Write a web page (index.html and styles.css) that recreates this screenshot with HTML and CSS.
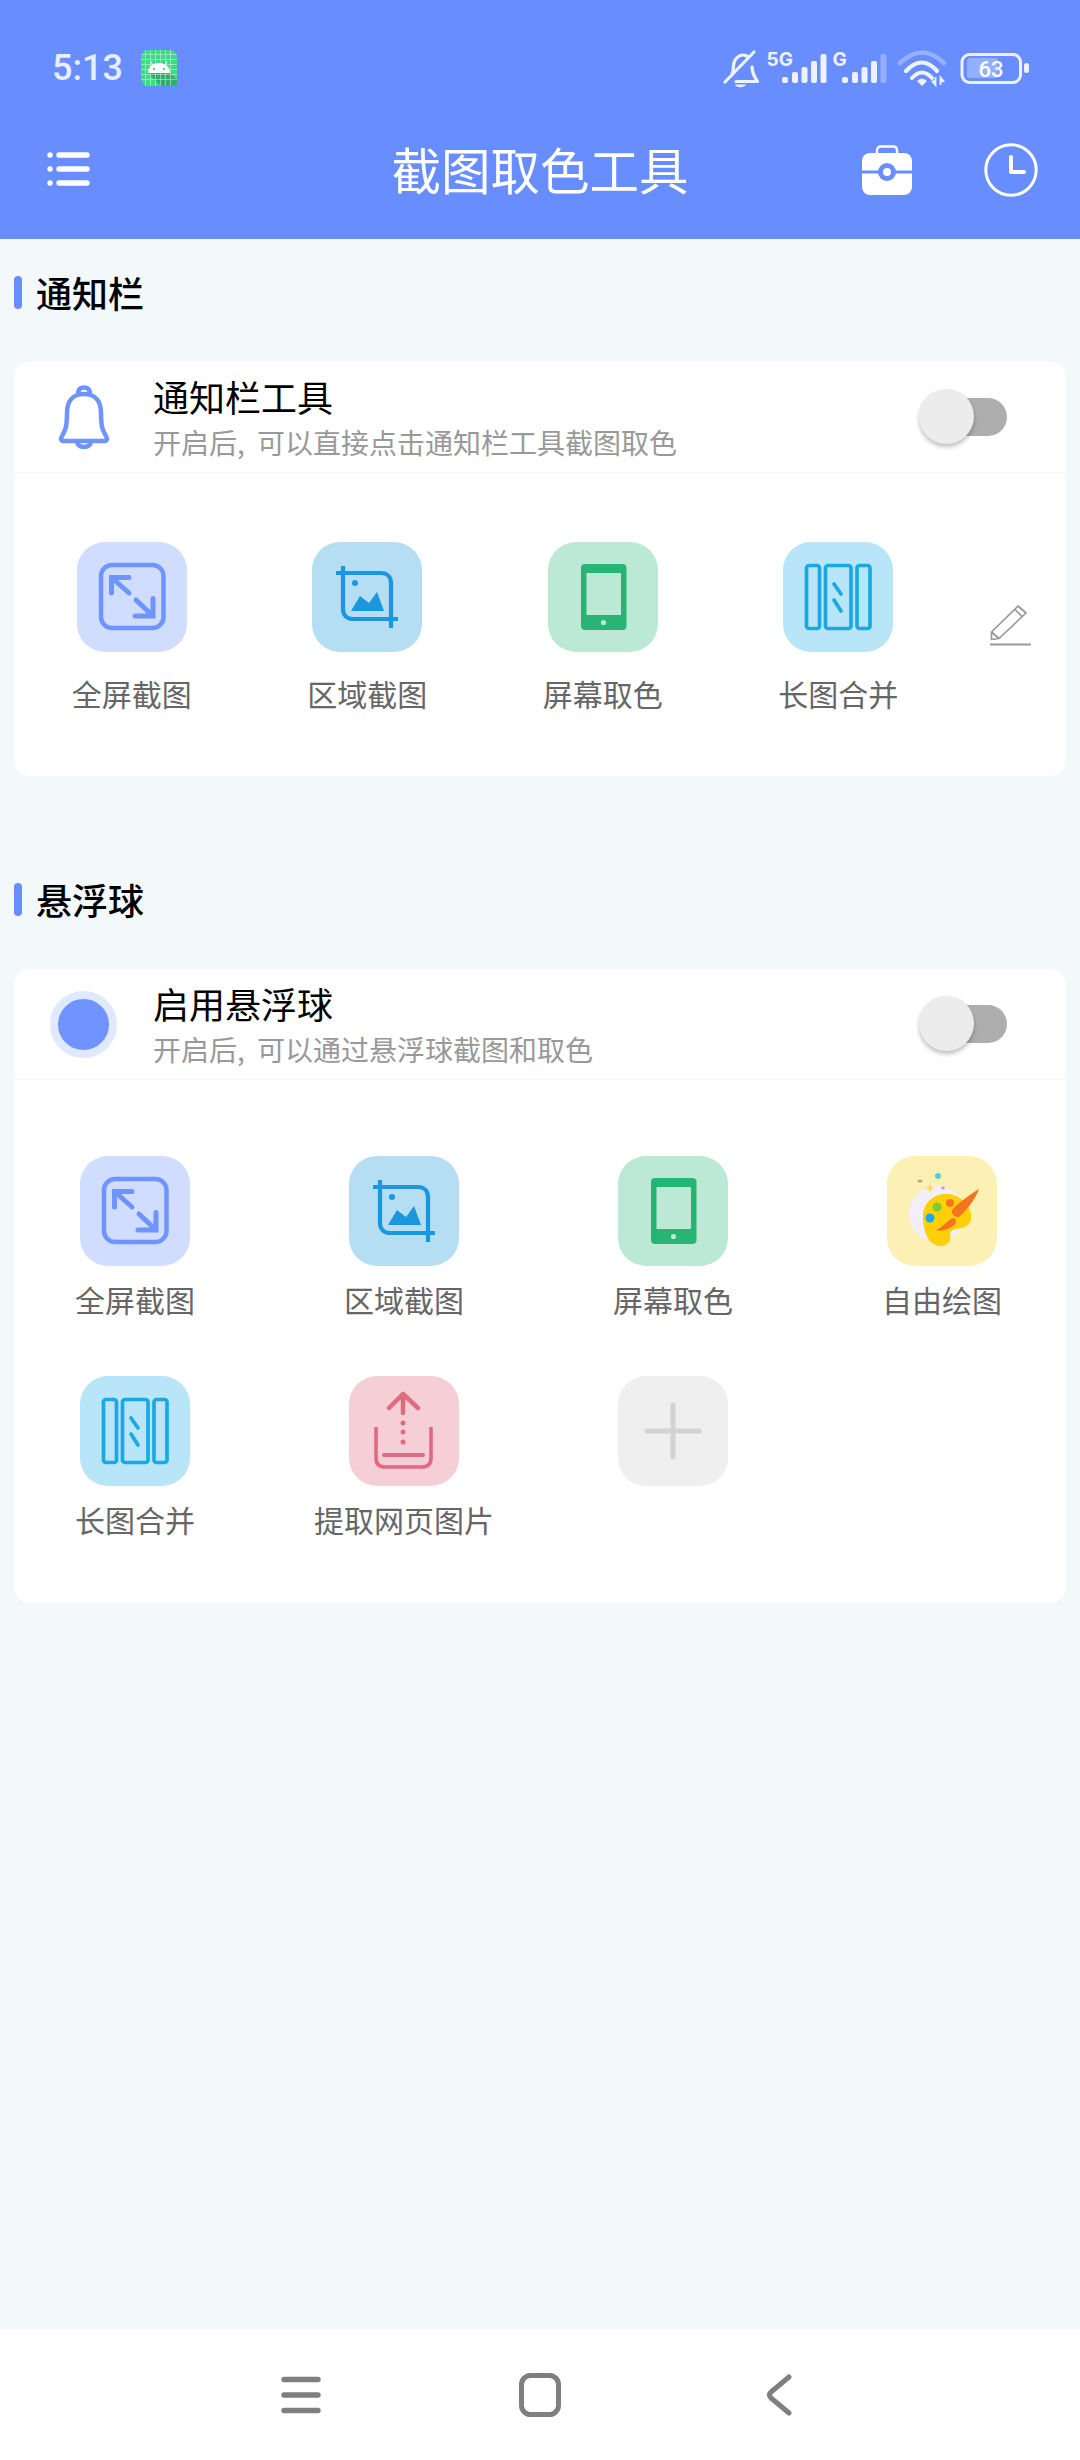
FILE: index.html
```html
<!doctype html>
<html lang="zh-CN">
<head>
	<meta charset="UTF-8">
	<title>截图取色工具</title>
	<link rel="stylesheet" href="styles.css">
</head>
<body>
	<header class="header">
		<div class="statusbar">
			<div class="status-left">
				<span class="time">5:13</span>
				<svg class="app-icon" width="36" height="36" viewBox="0 0 36 36">
					<rect width="36" height="36" rx="8" fill="#3ddc84"/>
					<path d="M7 23H29L36 30V36H20Z" fill="#2fae6c"/>
					<path d="M4.500 0V36M9.500 0V36M14.500 0V36M19.500 0V36M24.500 0V36M29.500 0V36M0 4.500H36M0 9.500H36M0 14.500H36M0 19.500H36M0 24.500H36M0 29.500H36" stroke="#fff" stroke-opacity=".4" stroke-width="1"/>
					<path d="M7 23C7 16.500 12 13 18 13S29 16.500 29 23Z" fill="#fff"/>
					<path d="M11.500 14.500L10 11.500M24.500 14.500L26 11.500" stroke="#fff" stroke-width="1"/>
					<circle cx="13" cy="19" r="1" fill="#2fae6c"/>
					<circle cx="23" cy="19" r="1" fill="#2fae6c"/>
				</svg>
			</div>
			<svg class="status-right" width="310" height="50" viewBox="0 -10 310 50">
				<g fill="none" stroke="#eef2ff" stroke-width="3.200" stroke-linecap="round" stroke-linejoin="round">
					<path d="M5 32L34 2"/>
					<path d="M12 25C13 22 13.500 20 13.500 16C13.500 10 18 5 23 5C25 5 27 6 28 7"/>
					<path d="M16 31.500H37.500C34 27 32.500 23 32 17"/>
				</g>
				<path d="M15 34.500H26C25 38 16 38 15 34.500Z" fill="#eef2ff"/>
				<text class="net" x="46.500" y="15.500">5G</text>
				<g fill="#eef2ff">
					<rect x="62" y="27" width="6" height="6" rx="2"/>
					<rect x="72" y="22" width="6" height="11" rx="2"/>
					<rect x="81.500" y="17" width="6" height="16" rx="2"/>
					<rect x="91" y="11" width="6" height="22" rx="2"/>
					<rect x="100.500" y="4" width="6" height="29" rx="2"/>
				</g>
				<text class="net" x="112.500" y="15.500">G</text>
				<g fill="#eef2ff">
					<rect x="122" y="27" width="6" height="6" rx="2"/>
					<rect x="132" y="22" width="6" height="11" rx="2"/>
					<rect x="141.500" y="17" width="6" height="16" rx="2"/>
					<rect x="151" y="11" width="6" height="22" rx="2"/>
					<rect x="160.500" y="4" width="6" height="29" rx="2" opacity=".35"/>
				</g>
				<g fill="none" stroke="#eef2ff" stroke-linecap="round">
					<path d="M180 13Q202 -8 224 13" stroke-width="4.500" opacity=".35"/>
					<path d="M186 21Q202 4 217 21" stroke-width="4.200"/>
					<path d="M192 28Q202 17 212 28" stroke-width="4"/>
				</g>
				<path d="M197 31Q202 26 207 31L202 36Z" fill="#eef2ff"/>
				<path d="M215.500 27V34M212.500 31.500L215.500 35L215.500 31ZM220.500 35V28M223.500 31L220.500 27.500L220.500 32Z" fill="#eef2ff" stroke="#eef2ff" stroke-width="1.800"/>
				<rect x="247" y="8" width="31" height="20" rx="3" fill="#fff" opacity=".3"/>
				<rect x="242" y="4.500" width="58.500" height="28" rx="7.500" fill="none" stroke="#eef2ff" stroke-width="3"/>
				<rect x="304" y="13" width="5" height="10" rx="2.500" fill="#eef2ff"/>
				<text class="batt" x="271" y="27" text-anchor="middle">63</text>
			</svg>
		</div>
		<div class="toolbar">
			<svg class="menu-icon" width="43" height="36" viewBox="0 0 43 36">
				<circle cx="3" cy="4" r="2.700" fill="#fff"/>
				<circle cx="3" cy="18" r="2.700" fill="#fff"/>
				<circle cx="3" cy="32" r="2.700" fill="#fff"/>
				<path d="M12 4H40M12 18H40M12 32H40" stroke="#fff" stroke-width="5.400" stroke-linecap="round"/>
			</svg>
			<h1 class="title">截图取色工具</h1>
			<div class="tool-right">
				<svg width="50" height="50" viewBox="0 0 50 50">
					<path d="M15 9V5.500C15 3 16.500 1.500 19 1.500H31C33.500 1.500 35 3 35 5.500V9" fill="none" stroke="#fff" stroke-width="2.400"/>
					<rect y="8" width="50" height="42" rx="8" fill="#fff"/>
					<path d="M0 27H50" stroke="#688dff" stroke-width="3"/>
					<circle cx="25" cy="27" r="9" fill="#688dff"/>
					<circle cx="25" cy="27" r="4" fill="#fff"/>
				</svg>
				<svg width="54" height="54" viewBox="0 0 54 54">
					<circle cx="27" cy="27" r="25.200" fill="none" stroke="#fff" stroke-width="3"/>
					<path d="M27 14V29H40" fill="none" stroke="#fff" stroke-width="4" stroke-linecap="round" stroke-linejoin="round"/>
				</svg>
			</div>
		</div>
	</header>

	<main class="main">
		<div class="sec-head">
			<i class="sec-bar"></i>
			<h2 class="sec-title">通知栏</h2>
		</div>
		<section class="card">
			<div class="row">
				<div class="row-icon">
					<svg width="52" height="64" viewBox="0 0 52 64">
						<g fill="none" stroke="#7094ff" stroke-width="4.500" stroke-linejoin="round">
							<path d="M3 54C3 52 5 50 7 45C9 40 9 34 9 28C9 16 15 9 26 9C37 9 43 16 43 28C43 34 43 40 45 45C47 50 49 52 49 54C49 55 48 56 47 56H5C4 56 3 55 3 54Z"/>
							<path d="M20 9C20 5 22 2.500 26 2.500C30 2.500 32 5 32 9"/>
							<path d="M19 56C19 60 22 62 26 62C30 62 33 60 33 56"/>
						</g>
					</svg>
				</div>
				<div class="row-text">
					<div class="row-title">通知栏工具</div>
					<div class="row-sub">开启后, 可以直接点击通知栏工具截图取色</div>
				</div>
				<div class="switch"><i class="knob"></i></div>
			</div>
			<div class="quick">
				<div class="cell">
					<div class="tile t-blue">
						<svg width="110" height="110" viewBox="0 0 110 110"><use href="#ic-full"/></svg>
					</div>
					<span class="label">全屏截图</span>
				</div>
				<div class="cell">
					<div class="tile t-sky">
						<svg width="110" height="110" viewBox="0 0 110 110"><use href="#ic-crop"/></svg>
					</div>
					<span class="label">区域截图</span>
				</div>
				<div class="cell">
					<div class="tile t-green">
						<svg width="110" height="110" viewBox="0 0 110 110"><use href="#ic-phone"/></svg>
					</div>
					<span class="label">屏幕取色</span>
				</div>
				<div class="cell">
					<div class="tile t-cyan">
						<svg width="110" height="110" viewBox="0 0 110 110"><use href="#ic-long"/></svg>
					</div>
					<span class="label">长图合并</span>
				</div>
				<div class="edit">
					<svg width="42" height="41" viewBox="0 0 42 41">
						<path d="M1.500 27L28 1L36 8L9 33.500L1.500 34.500ZM1.500 27L9 33.500M24.500 4L32 11.500" fill="none" stroke="#999" stroke-width="1.700" stroke-linejoin="round"/>
						<path d="M0 39.500H41" stroke="#999" stroke-width="2"/>
					</svg>
				</div>
			</div>
		</section>

		<div class="sec-head sec-next">
			<i class="sec-bar"></i>
			<h2 class="sec-title">悬浮球</h2>
		</div>
		<section class="card">
			<div class="row">
				<div class="row-icon"><i class="ball"></i></div>
				<div class="row-text">
					<div class="row-title">启用悬浮球</div>
					<div class="row-sub">开启后, 可以通过悬浮球截图和取色</div>
				</div>
				<div class="switch"><i class="knob"></i></div>
			</div>
			<div class="grid">
				<div class="cell">
					<div class="tile t-blue">
						<svg width="110" height="110" viewBox="0 0 110 110"><use href="#ic-full"/></svg>
					</div>
					<span class="label">全屏截图</span>
				</div>
				<div class="cell">
					<div class="tile t-sky">
						<svg width="110" height="110" viewBox="0 0 110 110"><use href="#ic-crop"/></svg>
					</div>
					<span class="label">区域截图</span>
				</div>
				<div class="cell">
					<div class="tile t-green">
						<svg width="110" height="110" viewBox="0 0 110 110"><use href="#ic-phone"/></svg>
					</div>
					<span class="label">屏幕取色</span>
				</div>
				<div class="cell">
					<div class="tile t-yellow">
						<svg width="110" height="110" viewBox="0 0 110 110">
							<circle cx="50" cy="58" r="28" fill="#f3effa"/>
							<path d="M36 60C36 45 50 36 62 38C76 40 86 52 84 64C82 72 72 72 66 74C62 76 64 80 63 84C60 92 48 92 42 84C38 78 36 70 36 60Z" fill="#ffd00a"/>
							<circle cx="63" cy="47" r="4" fill="#f5741f"/>
							<circle cx="50" cy="51" r="4.500" fill="#7ccb34"/>
							<circle cx="43" cy="62" r="4.500" fill="#1fa6e8"/>
							<path d="M92 33C84 38 72 46 65 54C64 58 68 62 72 61C80 54 89 42 92 33Z" fill="#f5741f"/>
							<path d="M49 74C56 72 60 64 66 62C70 62 70 68 66 70C62 73 55 76 49 74Z" fill="#f5741f"/>
							<circle cx="51" cy="20" r="3" fill="#5cc8d0"/>
							<ellipse cx="33" cy="25" rx="2.500" ry="1.500" fill="#b9a98a"/>
							<path d="M43 27L44.500 31L48 32L44.500 33.500L43 37L41.500 33.500L38 32L41.500 31Z" fill="#f8d875"/>
							<circle cx="56" cy="32" r="1.800" fill="#b9a8e0"/>
						</svg>
					</div>
					<span class="label">自由绘图</span>
				</div>
				<div class="cell">
					<div class="tile t-cyan">
						<svg width="110" height="110" viewBox="0 0 110 110"><use href="#ic-long"/></svg>
					</div>
					<span class="label">长图合并</span>
				</div>
				<div class="cell">
					<div class="tile t-red">
						<svg width="110" height="110" viewBox="0 0 110 110">
							<g fill="none" stroke="#df6b7f" stroke-linecap="round" stroke-linejoin="round">
								<path d="M40 32L54 18L69 32M54 18V37" stroke-width="4.500"/>
								<path d="M27 51V82C27 88 30 91 36 91H73C79 91 82 88 82 82V51" stroke-width="3.600" stroke-linecap="butt"/>
								<path d="M35 79H74" stroke-width="4"/>
							</g>
							<circle cx="54" cy="47" r="2.500" fill="#df6b7f"/>
							<circle cx="54" cy="56" r="2.500" fill="#df6b7f"/>
							<circle cx="54" cy="66" r="2.500" fill="#df6b7f"/>
						</svg>
					</div>
					<span class="label">提取网页图片</span>
				</div>
				<div class="cell">
					<div class="tile t-gray">
						<svg width="110" height="110" viewBox="0 0 110 110">
							<path d="M55 29V81M29 55H81" stroke="#d2d2d2" stroke-width="5" stroke-linecap="round"/>
						</svg>
					</div>
				</div>
			</div>
		</section>
	</main>

	<nav class="navbar">
		<svg width="40" height="38" viewBox="0 0 40 38">
			<path d="M3 3.500H37M3 19H37M3 34.500H37" stroke="#7f7f7f" stroke-width="5.400" stroke-linecap="round"/>
		</svg>
		<svg width="42" height="44" viewBox="0 0 42 44">
			<rect x="2.500" y="2.500" width="37" height="39" rx="9" fill="none" stroke="#7f7f7f" stroke-width="5"/>
		</svg>
		<svg width="26" height="42" viewBox="0 0 26 42">
			<path d="M23 3L5 18C3 20 3 22 5 24L23 39" fill="none" stroke="#7f7f7f" stroke-width="5" stroke-linecap="round" stroke-linejoin="round"/>
		</svg>
	</nav>

	<!-- shared tool icons -->
	<svg class="defs" width="0" height="0">
		<defs>
			<g id="ic-full" fill="none" stroke="#7094ff" stroke-linecap="round">
				<rect x="24" y="23" width="62.500" height="63" rx="11" stroke-width="4.500"/>
				<path d="M52 35.500H34.500V51M34.500 35.500L52 51M58 74H76V56.500M76 74L59 58" stroke-width="5"/>
			</g>
			<g id="ic-crop">
				<g fill="none" stroke="#1a97dd" stroke-width="4.200">
					<path d="M31 24V67C31 73 35 77 41 77H86"/>
					<path d="M24 31H69C75 31 79 35 79 41V86"/>
				</g>
				<circle cx="43" cy="41" r="3" fill="#1a97dd"/>
				<path d="M39 69L48 54L57 61L65 50L72 69Z" fill="#1a97dd"/>
			</g>
			<g id="ic-phone">
				<rect x="33" y="22" width="45.500" height="66" rx="4" fill="#27b574"/>
				<rect x="38.500" y="31" width="34.500" height="42" fill="#bbe9d5"/>
				<circle cx="55.500" cy="80.500" r="2.600" fill="#bbe9d5"/>
			</g>
			<g id="ic-long" fill="none" stroke="#1aa9e3" stroke-width="3.700">
				<rect x="23.500" y="23.500" width="13" height="63" rx="2.500"/>
				<rect x="42.500" y="23.500" width="25.500" height="63" rx="2.500"/>
				<rect x="74" y="23.500" width="13" height="63" rx="2.500"/>
				<path d="M51 42L58 52M51 58L58 69" stroke-linecap="round"/>
			</g>
		</defs>
	</svg>
</body>
</html>
```

FILE: styles.css
```css
* { box-sizing: border-box; }
html, body { margin: 0; padding: 0; }
body {
	width: 1080px;
	height: 2460px;
	display: flex;
	flex-direction: column;
	background: #f3f8fb;
	font-family: "Noto Sans CJK SC", "Noto Sans", sans-serif;
}
h1, h2 { margin: 0; font-weight: 400; }
svg { display: block; }
.defs { position: absolute; }

/* header */
.header { height: 239px; background: #688dff; color: #fff; }
.statusbar { height: 100px; display: flex; justify-content: space-between; padding: 40px 50px 0 52px; }
.status-left { display: flex; gap: 18px; height: 36px; margin-top: 10px; align-items: center; }
.time { font: 500 36px/36px Roboto, sans-serif; color: #e8edff; }
.net { font: 700 19px Inter, sans-serif; fill: #eef2ff; }
.batt { font: 500 22px Roboto, sans-serif; fill: #fff; }
.toolbar {
	height: 139px;
	display: grid;
	grid-template-columns: 1fr auto 1fr;
	align-items: center;
	padding: 0 42px;
}
.menu-icon { margin-left: 5px; margin-top: -2px; }
.title { font-size: 49.5px; line-height: 70px; margin-top: -2px; color: #fff; }
.tool-right { display: flex; justify-content: flex-end; align-items: center; gap: 72px; }

/* sections */
.main { flex: 1; padding: 37px 14px 0; }
.sec-head { height: 33px; display: flex; align-items: center; gap: 14px; margin-bottom: 53px; }
.sec-next { margin-top: 107px; }
.sec-bar { width: 8px; height: 33px; border-radius: 4px; background: #688dff; }
.sec-title { font-size: 36px; line-height: 33px; font-weight: 500; color: #000; }

.card { background: #fff; border-radius: 16px; }
.row {
	height: 111px;
	display: flex;
	align-items: center;
	padding-right: 59px;
	border-bottom: 1px solid #f3f4f5;
}
.row-icon { width: 139px; padding-left: 36px; display: flex; }
.row-icon svg { margin-left: 8px; }
.ball { width: 67px; height: 67px; border-radius: 50%; background: #7094ff; border: 8px solid #e1e9ff; }
.row-text { flex: 1; }
.row-title { font-size: 36px; line-height: 46px; color: #000; }
.row-sub { font-size: 28px; line-height: 38px; margin-top: 4px; color: #999; word-spacing: 6px; }

.switch { position: relative; width: 73px; height: 38px; border-radius: 19px; background: #aeaeae; }
.knob {
	position: absolute;
	left: -15px;
	top: -9px;
	width: 55px;
	height: 55px;
	border-radius: 50%;
	background: #ececec;
	box-shadow: 0 3px 4px rgba(0, 0, 0, .25);
}

/* tool cells */
.quick { display: flex; padding: 69px 0 61px; }
.quick .cell { flex: 1; }
.quick .label { margin-top: 19px; line-height: 44px; }
.edit { width: 110px; padding: 63px 0 0 34px; }
.grid {
	display: grid;
	grid-template-columns: repeat(4, 1fr);
	column-gap: 49px;
	row-gap: 57px;
	padding: 76px 14px 64px 11px;
}
.cell { display: flex; flex-direction: column; align-items: center; }
.tile { width: 110px; height: 110px; border-radius: 28px; }
.label { margin-top: 13px; font-size: 30px; line-height: 40px; color: #666; white-space: nowrap; }
.t-blue { background: #d0ddff; }
.t-sky { background: #b6def3; }
.t-green { background: #bbe9d5; }
.t-cyan { background: #b8e5f7; }
.t-yellow { background: #fdf0b5; }
.t-red { background: #f6ced6; }
.t-gray { background: #efefef; }

/* bottom nav */
.navbar {
	height: 130px;
	background: #fff;
	display: grid;
	grid-template-columns: repeat(3, 239px);
	justify-content: center;
	justify-items: center;
	align-items: center;
}
```
